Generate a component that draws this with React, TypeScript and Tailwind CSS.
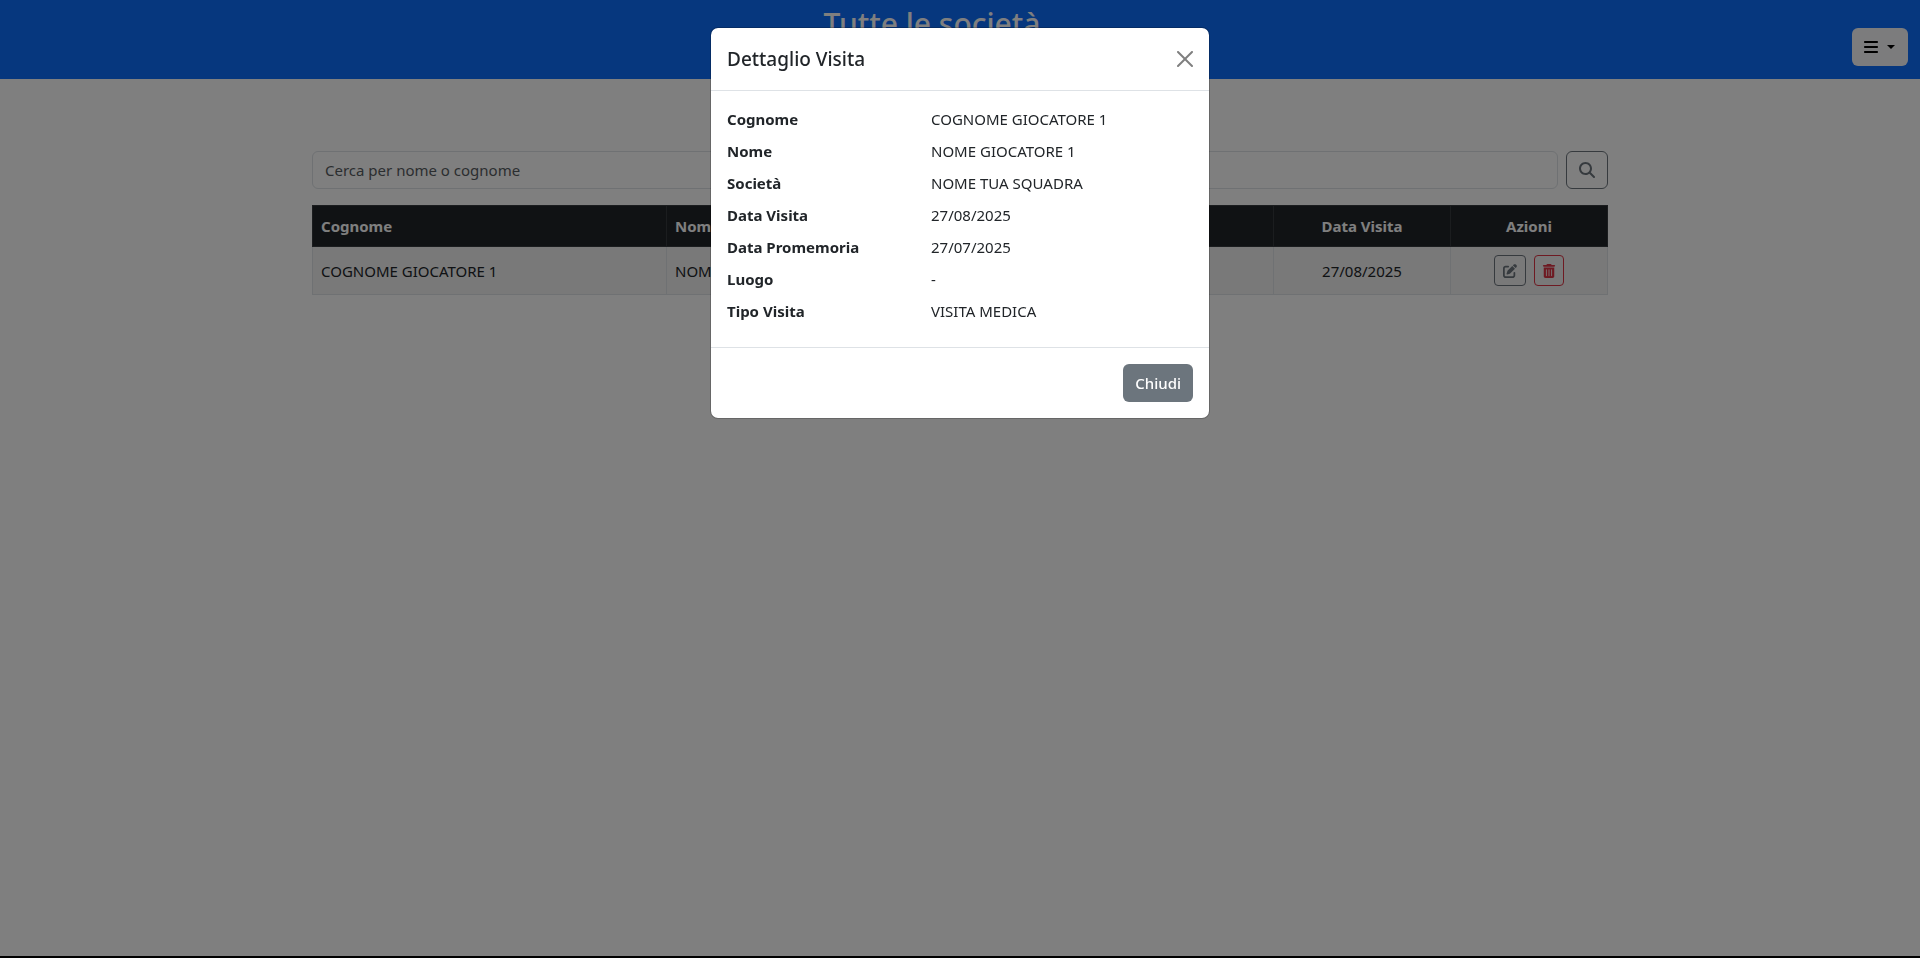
import type { ReactNode } from "react";
import { FaBars, FaMagnifyingGlass, FaPenToSquare, FaTrashCan } from "react-icons/fa6";

const details = [
  ["Cognome", "COGNOME GIOCATORE 1"],
  ["Nome", "NOME GIOCATORE 1"],
  ["Società", "NOME TUA SQUADRA"],
  ["Data Visita", "27/08/2025"],
  ["Data Promemoria", "27/07/2025"],
  ["Luogo", "-"],
  ["Tipo Visita", "VISITA MEDICA"],
];

function Th({ children, className = "" }: { children: ReactNode; className?: string }) {
  return (
    <th scope="col" className={"border border-[#373b3e] px-2 font-bold text-white " + className}>
      {children}
    </th>
  );
}

function Td({ children, className = "" }: { children: ReactNode; className?: string }) {
  return <td className={"border border-[#dee2e6] px-2 py-2 " + className}>{children}</td>;
}

function Page() {
  return (
    <div className="flex min-h-screen flex-col border-b-2 border-black bg-white">
      <header className="flex h-[79px] items-start bg-[#0d6efd] pr-3">
        <h1 className="flex-1 pl-3 text-center text-[30px] leading-[48px] font-medium text-white">
          Tutte le società
        </h1>
        <button
          type="button"
          aria-label="Menu"
          className="mt-7 flex h-[38px] w-14 items-center justify-center gap-2 rounded-md bg-[#f8f9fa] pr-0.5 text-black"
        >
          <FaBars className="size-4" />
          <span className="border-x-4 border-t-4 border-x-transparent border-t-black" />
        </button>
      </header>
      <main className="mx-auto w-full max-w-[1320px] px-3 pt-[72px]">
        <form className="flex gap-2">
          <input
            type="search"
            aria-label="Cerca per nome o cognome"
            placeholder="Cerca per nome o cognome"
            className="h-[38px] min-w-0 flex-1 rounded-md border border-[#dee2e6] px-3 placeholder:text-[#575c61]"
          />
          <button
            type="button"
            aria-label="Cerca"
            className="flex h-[38px] w-[42px] items-center justify-center rounded-md border border-[#6c757d] text-[#6c757d]"
          >
            <FaMagnifyingGlass className="size-4" />
          </button>
        </form>
        <table className="mt-4 w-full table-fixed border-collapse">
          <colgroup>
            <col className="w-[354px]" />
            <col className="w-[294px]" />
            <col />
            <col className="w-[177px]" />
            <col className="w-[157px]" />
          </colgroup>
          <thead className="bg-[#212529]">
            <tr className="h-[41px]">
              <Th className="text-left">Cognome</Th>
              <Th className="text-left">Nome</Th>
              <Th className="text-left">Società</Th>
              <Th className="text-center">Data Visita</Th>
              <Th className="text-center">Azioni</Th>
            </tr>
          </thead>
          <tbody className="bg-[#f2f2f2]">
            <tr>
              <Td>COGNOME GIOCATORE 1</Td>
              <Td>NOME GIOCATORE 1</Td>
              <Td>NOME TUA SQUADRA</Td>
              <Td className="text-center">27/08/2025</Td>
              <Td>
                <div className="flex justify-center gap-2">
                  <button
                    type="button"
                    aria-label="Modifica"
                    className="flex h-[31px] w-8 items-center justify-center rounded-sm border border-[#6c757d] text-[#6c757d]"
                  >
                    <FaPenToSquare className="size-[14px]" />
                  </button>
                  <button
                    type="button"
                    aria-label="Elimina"
                    className="flex h-[31px] w-[30px] items-center justify-center rounded-sm border border-[#dc3545] text-[#dc3545]"
                  >
                    <FaTrashCan className="size-[14px]" />
                  </button>
                </div>
              </Td>
            </tr>
          </tbody>
        </table>
      </main>
    </div>
  );
}

function VisitDialog() {
  return (
    <div className="fixed inset-0 overflow-y-auto bg-black/50 pt-[27px]">
      <div
        role="dialog"
        aria-modal="true"
        aria-labelledby="visit-title"
        className="mx-auto w-full max-w-[500px] rounded-lg border border-black/20 bg-white bg-clip-padding"
      >
        <div className="flex items-center justify-between border-b border-[#dee2e6] p-4">
          <h2 id="visit-title" className="text-[19px] leading-[30px] font-medium">
            Dettaglio Visita
          </h2>
          <button type="button" aria-label="Chiudi finestra" className="text-black/50">
            <svg viewBox="0 0 16 16" className="size-4" fill="currentColor">
              <path d="M.293.293a1 1 0 0 1 1.414 0L8 6.586 14.293.293a1 1 0 1 1 1.414 1.414L9.414 8l6.293 6.293a1 1 0 0 1-1.414 1.414L8 9.414l-6.293 6.293a1 1 0 0 1-1.414-1.414L6.586 8 .293 1.707a1 1 0 0 1 0-1.414z" />
            </svg>
          </button>
        </div>
        <dl className="p-4">
          {details.map(([label, value]) => (
            <div key={label} className="mb-2 flex gap-6">
              <dt className="w-[180px] font-bold">{label}</dt>
              <dd className="flex-1">{value}</dd>
            </div>
          ))}
        </dl>
        <div className="flex justify-end border-t border-[#dee2e6] p-4">
          <button
            type="button"
            className="h-[38px] rounded-md bg-[#6c757d] px-3 font-medium text-white"
          >
            Chiudi
          </button>
        </div>
      </div>
    </div>
  );
}

export default function App() {
  return (
    <div className="font-['Noto_Sans','Open_Sans',sans-serif] text-[15px] leading-6 text-[#212529]">
      <Page />
      <VisitDialog />
    </div>
  );
}
